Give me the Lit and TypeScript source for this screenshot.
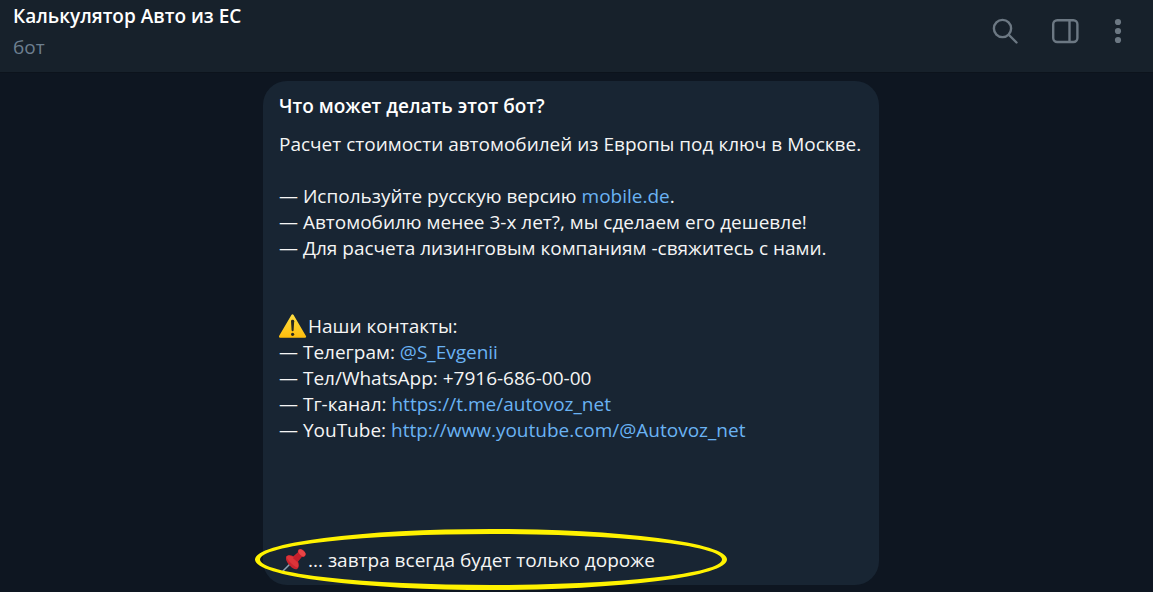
import { LitElement, html, css, svg } from "lit";
import { customElement } from "lit/decorators.js";

const warningIcon = svg`<svg class="emoji" viewBox="0 0 28 26" aria-hidden="true">
    <defs>
      <linearGradient id="amber" x1="0" y1="0" x2="0" y2="1">
        <stop offset="0" stop-color="#ffdf43" />
        <stop offset="1" stop-color="#fdbd0c" />
      </linearGradient>
    </defs>
    <path d="M12.4 2.1q1.1-1.9 2.2 0L26.8 22.8q1 1.9-1 1.9H1.2q-2 0-1-1.9Z" fill="url(#amber)" />
    <path d="M12 8.2q0-1.400 1.600-1.400t1.600 1.400l-.6 9q-.1 1-1 1t-1-1Z" fill="#2b2a20" />
    <circle cx="13.6" cy="21.3" r="1.6" fill="#2b2a20" />
  </svg>`;

const pinIcon = svg`<svg class="emoji" viewBox="0 0 28 26" aria-hidden="true">
    <path d="M3.2 24.8 13 15" stroke="#8fa3b4" stroke-width="1.5" fill="none" />
    <path d="M7.4 9.6C9 7.6 12 8 14.4 9.2L19 5.3C18.2 2.8 20.4 1.2 23 2.6c2.600 1.400 4.400 4 3.400 6-.7 1.400-2.200 1.600-3.400 1.100L19 14.400c1.200 2.800 1.200 5.800-.6 7.400-1.600 1.400-5-.2-7.400-3C8.200 16 6 12.400 7.400 9.600Z" fill="#c9252f" />
    <path d="M7.400 9.600c1.600-2 5-1.300 8 1.300 3.200 2.800 4.800 7 3.400 9.700-1.600-.2-4.400-2-6.900-4.600-2.500-2.400-4.300-4.400-4.500-6.400Z" fill="#dd3439" />
    <path d="m14 11.200 5.500-5.400 3.300 3.400-4.700 5.600Z" fill="#c51f2c" />
    <ellipse cx="22.900" cy="5.900" rx="4.100" ry="2.500" transform="rotate(44 22.900 5.900)" fill="#ea4546" />
  </svg>`;

@customElement("app-root")
export class AppRoot extends LitElement {
  static styles = css`
    :host {
      display: flex;
      flex-direction: column;
      min-height: 100vh;
      background: #0e1621;
      color: #f5f5f5;
      font: 19px/26px "Open Sans", "Noto Sans", sans-serif;
    }
    .topbar {
      display: flex;
      justify-content: space-between;
      align-items: center;
      box-sizing: border-box;
      height: 73px;
      padding: 0 28px 10px 13px;
      background: #17212b;
      border-bottom: 1px solid #0c131c;
    }
    .name,
    .title {
      margin: 0;
      font-size: 19px;
      line-height: 26px;
      font-weight: 600;
      color: #fff;
    }
    .status {
      margin: 5px 0 0;
      color: #6d7f8f;
    }
    .actions {
      display: flex;
      align-items: center;
      gap: 32px;
    }
    .action {
      display: flex;
      padding: 0;
      border: 0;
      background: none;
      color: #6c7883;
      cursor: pointer;
    }
    .action svg {
      display: block;
      height: 28px;
      fill: none;
      stroke: currentColor;
      stroke-width: 2.4;
    }
    .action .dots {
      fill: currentColor;
      stroke: none;
    }
    .chat {
      display: flex;
      justify-content: center;
      align-items: flex-start;
      padding: 8px 11px 7px 0;
    }
    .card {
      position: relative;
      box-sizing: border-box;
      flex: 0 1 616px;
      padding: 12px 16px;
      border-radius: 24px;
      background: #182533;
    }
    .text {
      margin: 12px 0 26px;
    }
    .line {
      margin: 0;
    }
    .contacts {
      margin: 52px 0 104px;
    }
    .link {
      color: #6ab3f3;
      text-decoration: none;
    }
    .emoji {
      width: 28px;
      height: 26px;
      margin-right: 1px;
      vertical-align: top;
    }
    .marker {
      position: absolute;
      left: -8px;
      bottom: -5px;
      width: 472px;
      height: 61px;
      box-sizing: border-box;
      border: 5px solid #fff200;
      border-radius: 50%;
      pointer-events: none;
    }
  `;

  render() {
    return html`
      <header class="topbar">
        <div>
          <h1 class="name">Калькулятор Авто из ЕС</h1>
          <p class="status">бот</p>
        </div>
        <div class="actions">
          <button class="action" aria-label="Поиск">
            <svg width="28" viewBox="0 0 28 28"><circle cx="11.5" cy="11.5" r="8.6" /><path d="m18 18 7.500 7.500" stroke-linecap="round" /></svg>
          </button>
          <button class="action" aria-label="Боковая панель">
            <svg width="28" viewBox="0 0 28 28"><rect x="2.200" y="3.200" width="24.200" height="21.800" rx="4" /><path d="M18.500 3v22" /></svg>
          </button>
          <button class="action" aria-label="Меню">
            <svg class="dots" width="14" viewBox="0 0 14 28"><circle cx="7" cy="5" r="3.100" /><circle cx="7" cy="14" r="3.100" /><circle cx="7" cy="23" r="3.100" /></svg>
          </button>
        </div>
      </header>
      <main class="chat">
        <article class="card">
          <h2 class="title">Что может делать этот бот?</h2>
          <p class="text">Расчет стоимости автомобилей из Европы под ключ в Москве.</p>
          <p class="line">— Используйте русскую версию <a class="link" href="https://mobile.de">mobile.de</a>.</p>
          <p class="line">— Автомобилю менее 3-х лет?, мы сделаем его дешевле!</p>
          <p class="line">— Для расчета лизинговым компаниям -свяжитесь с нами.</p>
          <section class="contacts">
            <p class="line">${warningIcon}Наши контакты:</p>
            <p class="line">— Телеграм: <a class="link" href="https://t.me/S_Evgenii">@S_Evgenii</a></p>
            <p class="line">— Тел/WhatsApp: +7916-686-00-00</p>
            <p class="line">— Тг-канал: <a class="link" href="https://t.me/autovoz_net">https://t.me/autovoz_net</a></p>
            <p class="line">— YouTube: <a class="link" href="http://www.youtube.com/@Autovoz_net">http://www.youtube.com/@Autovoz_net</a></p>
          </section>
          <p class="line">${pinIcon}... завтра всегда будет только дороже</p>
          <div class="marker"></div>
        </article>
      </main>
    `;
  }
}
